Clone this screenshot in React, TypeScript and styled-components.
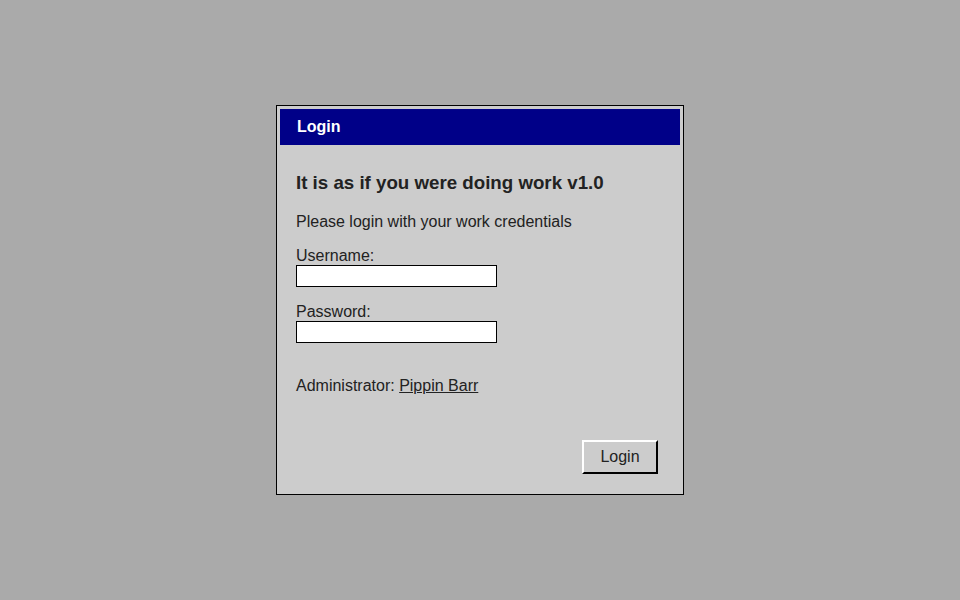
import styled, { createGlobalStyle } from "styled-components";

const GlobalStyle = createGlobalStyle`
  html, body {
    margin: 0;
    padding: 0;
    background: #aaaaaa;
    font-family: "Liberation Sans", Arial, sans-serif;
  }
`;

const Page = styled.div`
  width: 960px;
  height: 600px;
  display: flex;
  align-items: center;
  justify-content: center;
`;

const Window = styled.div`
  width: 400px;
  height: 382px;
  padding: 3px;
  border: 1px solid #000;
  background: #cccccc;
  display: flex;
  flex-direction: column;
`;

const TitleBar = styled.div`
  height: 36px;
  background: #000088;
  color: #fff;
  font-size: 16px;
  font-weight: bold;
  display: flex;
  align-items: center;
  padding-left: 17px;
`;

const Body = styled.div`
  flex: 1;
  display: flex;
  flex-direction: column;
  padding: 0 22px 17px 16px;
  color: #222;
`;

const Heading = styled.h1`
  margin: 27px 0 0;
  font-size: 18.72px;
  line-height: 22px;
  font-weight: bold;
`;

const Text = styled.p<{ $top: number }>`
  margin: ${({ $top }) => $top}px 0 0;
  font-size: 16px;
  line-height: 20px;
`;

const Field = styled.label<{ $top: number }>`
  display: flex;
  flex-direction: column;
  align-items: flex-start;
  margin-top: ${({ $top }) => $top}px;
  font-size: 16px;
  line-height: 18px;
`;

const Input = styled.input`
  box-sizing: border-box;
  width: 201px;
  height: 22px;
  margin: 0;
  border: 1px solid #000;
  background: #fff;
  outline: none;
`;

const Link = styled.a`
  color: #222;
  text-decoration: underline;
`;

const Footer = styled.div`
  margin-top: auto;
  display: flex;
  justify-content: flex-end;
`;

const Button = styled.button`
  box-sizing: border-box;
  width: 76px;
  height: 34px;
  background: #cccccc;
  border: 2px solid;
  border-color: #fff #000 #000 #fff;
  font-family: "Liberation Sans", Arial, sans-serif;
  font-size: 16px;
  color: #222;
  cursor: pointer;
`;

export default function App() {
  return (
    <Page>
      <GlobalStyle />
      <Window>
        <TitleBar>Login</TitleBar>
        <Body>
          <Heading>It is as if you were doing work v1.0</Heading>
          <Text $top={18}>Please login with your work credentials</Text>
          <Field $top={15}>
            Username:
            <Input type="text" />
          </Field>
          <Field $top={16}>
            Password:
            <Input type="password" />
          </Field>
          <Text $top={33}>
            Administrator: <Link href="#">Pippin Barr</Link>
          </Text>
          <Footer>
            <Button>Login</Button>
          </Footer>
        </Body>
      </Window>
    </Page>
  );
}
